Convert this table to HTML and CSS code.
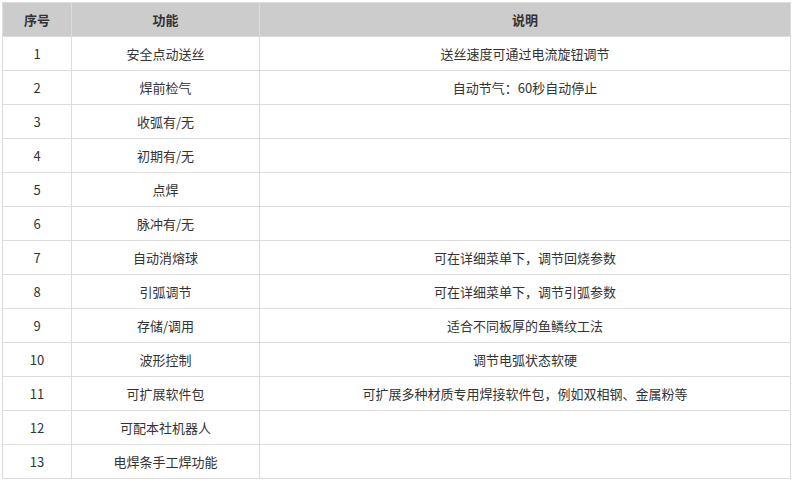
FILE: index.html
```html
<!DOCTYPE html>
<html lang="zh">
<head>
<meta charset="utf-8">
<link rel="stylesheet" href="styles.css">
</head>
<body>
<table class="spec">
  <colgroup>
    <col class="c1"><col class="c2"><col class="c3">
  </colgroup>
  <thead>
    <tr><th>序号</th><th>功能</th><th>说明</th></tr>
  </thead>
  <tbody>
    <tr><td>1</td><td>安全点动送丝</td><td>送丝速度可通过电流旋钮调节</td></tr>
    <tr><td>2</td><td>焊前检气</td><td>自动节气：60秒自动停止</td></tr>
    <tr><td>3</td><td>收弧有/无</td><td></td></tr>
    <tr><td>4</td><td>初期有/无</td><td></td></tr>
    <tr><td>5</td><td>点焊</td><td></td></tr>
    <tr><td>6</td><td>脉冲有/无</td><td></td></tr>
    <tr><td>7</td><td>自动消熔球</td><td>可在详细菜单下，调节回烧参数</td></tr>
    <tr><td>8</td><td>引弧调节</td><td>可在详细菜单下，调节引弧参数</td></tr>
    <tr><td>9</td><td>存储/调用</td><td>适合不同板厚的鱼鳞纹工法</td></tr>
    <tr><td>10</td><td>波形控制</td><td>调节电弧状态软硬</td></tr>
    <tr><td>11</td><td>可扩展软件包</td><td>可扩展多种材质专用焊接软件包，例如双相钢、金属粉等</td></tr>
    <tr><td>12</td><td>可配本社机器人</td><td></td></tr>
    <tr><td>13</td><td>电焊条手工焊功能</td><td></td></tr>
  </tbody>
</table>
</body>
</html>
```
FILE: styles.css
```css
html, body {
  margin: 0;
  padding: 0;
  background: #fff;
}
body {
  padding: 2px;
  font-family: "Noto Sans CJK SC", "Noto Sans", "Liberation Sans", sans-serif;
  font-size: 13px;
  color: #333;
}
.spec {
  border-collapse: collapse;
  width: 789px;
  table-layout: fixed;
}
.c1 { width: 69px; }
.c2 { width: 188px; }
.c3 { width: auto; }
.spec th, .spec td {
  border: 1px solid #dcdcdc;
  height: 33px;
  padding: 0;
  text-align: center;
  vertical-align: middle;
  line-height: 18px;
}
.spec th {
  background: #cccccc;
  font-weight: bold;
  color: #333;
}
```
